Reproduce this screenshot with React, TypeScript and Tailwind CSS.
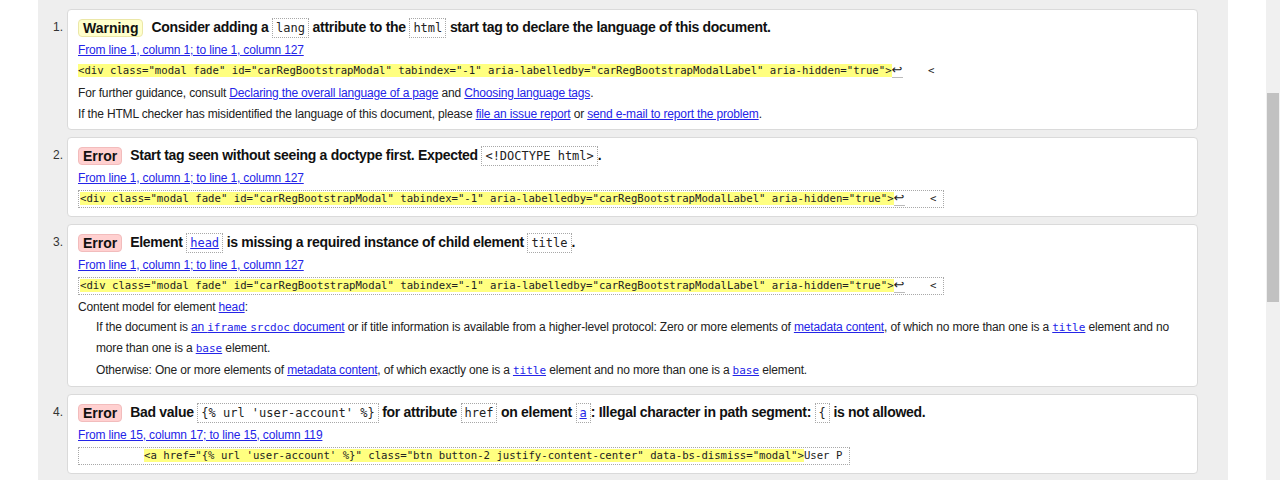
import React from "react";

const MONO = "font-['DejaVu_Sans_Mono','Liberation_Mono',monospace]";
const LINK = "text-[#2424e8] underline decoration-[#2424e8]";

const Code = ({ children, link }: { children: React.ReactNode; link?: boolean }) => (
  <span
    className={`${MONO} inline-block border border-dotted border-[#a8a8a8] px-[3px] align-middle text-[12px] font-normal leading-[18px] tracking-normal ${
      link ? LINK : "text-[#222]"
    }`}
  >
    {children}
  </span>
);

const Badge = ({ kind }: { kind: "Warning" | "Error" }) => (
  <span
    className={
      kind === "Warning"
        ? "inline-block rounded-[4px] border border-[#ebe7a8] bg-[#ffffcc] px-[4px] align-middle text-[14px] font-bold leading-[16px] tracking-normal text-[#111]"
        : "inline-block rounded-[4px] border border-[#f2bcbc] bg-[#ffd0d0] px-[4px] align-middle text-[14px] font-bold leading-[16px] tracking-normal text-[#111]"
    }
  >
    {kind}
  </span>
);

const Location = ({ text }: { text: string }) => (
  <div className="flex h-[22px] items-center pt-[1px]">
    <a className={LINK}>{text}</a>
  </div>
);

const DIV_TAG =
  '<div class="modal fade" id="carRegBootstrapModal" tabindex="-1" aria-labelledby="carRegBootstrapModalLabel" aria-hidden="true">';

const Return = () => (
  <span className="inline-block border-b border-[#bbb] font-['DejaVu_Sans',sans-serif] text-[13px] leading-[14px]">
    ↩
  </span>
);

const Extract = ({ boxed }: { boxed?: boolean }) => (
  <div className="flex h-[22px] items-center">
    <span
      className={`${MONO} inline-block whitespace-pre text-[10.65px] leading-[16px] tracking-normal text-[#222] ${
        boxed ? "border border-dotted border-[#a8a8a8] pl-[1px]" : ""
      }`}
    >
      <span className="bg-[#ffff80]">{DIV_TAG}</span>
      <Return />
      {"    < "}
    </span>
  </div>
);

const Card = ({ n, h, children }: { n: number; h: string; children: React.ReactNode }) => (
  <li className="flex">
    <div className="w-[29px] shrink-0 pr-[4px] pt-[7px] text-right text-[12px] leading-[22px] text-[#333]">
      {n}.
    </div>
    <div
      className={`${h} w-[1131px] rounded-[4px] border border-[#dadada] bg-white px-[10px] pt-[6px] text-[12px] tracking-[-0.16px] text-[#222]`}
    >
      {children}
    </div>
  </li>
);

const Heading = ({ children }: { children: React.ReactNode }) => (
  <div className="h-[22px] whitespace-nowrap text-[14px] font-bold leading-[22px] tracking-[-0.3px] text-[#111]">
    {children}
  </div>
);

export default function App() {
  return (
    <div className="flex h-[480px] overflow-hidden bg-white font-['Liberation_Sans',Arial,sans-serif]">
      <div className="w-[38px] shrink-0 bg-white" />
      <div className="flex-1 bg-[#eeeeee] pt-[9px]">
        <ol className="flex flex-col gap-[7px]">
          <Card n={1} h="h-[121px]">
            <Heading>
              <Badge kind="Warning" />
              <span className="ml-[8px]">Consider adding a </span>
              <Code>lang</Code> attribute to the <Code>html</Code> start tag to declare the language of this
              document.
            </Heading>
            <Location text="From line 1, column 1; to line 1, column 127" />
            <Extract />
            <div className="flex h-[21px] items-center whitespace-pre">
              For further guidance, consult <a className={LINK}>Declaring the overall language of a page</a> and{" "}
              <a className={LINK}>Choosing language tags</a>.
            </div>
            <div className="flex h-[21px] items-center whitespace-pre">
              If the HTML checker has misidentified the language of this document, please{" "}
              <a className={LINK}>file an issue report</a> or <a className={LINK}>send e-mail to report the problem</a>.
            </div>
          </Card>

          <Card n={2} h="h-[80px]">
            <Heading>
              <Badge kind="Error" />
              <span className="ml-[8px]">Start tag seen without seeing a doctype first. Expected </span>
              <Code>{"<!DOCTYPE html>"}</Code>.
            </Heading>
            <Location text="From line 1, column 1; to line 1, column 127" />
            <Extract boxed />
          </Card>

          <Card n={3} h="h-[163px]">
            <Heading>
              <Badge kind="Error" />
              <span className="ml-[8px]">Element </span>
              <Code link>head</Code> is missing a required instance of child element <Code>title</Code>.
            </Heading>
            <Location text="From line 1, column 1; to line 1, column 127" />
            <Extract boxed />
            <div className="flex h-[20px] items-center whitespace-pre">
              Content model for element <a className={LINK}>head</a>:
            </div>
            <div className="ml-[18px] whitespace-nowrap leading-[21px]">
              If the document is{" "}
              <a className={LINK}>
                an <span className={`${MONO} text-[11px] tracking-normal`}>iframe</span>{" "}
                <span className={`${MONO} text-[11px] tracking-normal`}>srcdoc</span> document
              </a>{" "}
              or if title information is available from a higher-level protocol: Zero or more elements of{" "}
              <a className={LINK}>metadata content</a>, of which no more than one is a{" "}
              <a className={`${LINK} ${MONO} text-[11px] tracking-normal`}>title</a> element and no
              <br />
              more than one is a <a className={`${LINK} ${MONO} text-[11px] tracking-normal`}>base</a> element.
            </div>
            <div className="ml-[18px] whitespace-nowrap leading-[22px]">
              Otherwise: One or more elements of <a className={LINK}>metadata content</a>, of which exactly one is a{" "}
              <a className={`${LINK} ${MONO} text-[11px] tracking-normal`}>title</a> element and no more than one is a{" "}
              <a className={`${LINK} ${MONO} text-[11px] tracking-normal`}>base</a> element.
            </div>
          </Card>

          <Card n={4} h="h-[80px]">
            <Heading>
              <Badge kind="Error" />
              <span className="ml-[8px]">Bad value </span>
              <Code>{"{% url 'user-account' %}"}</Code> for attribute <Code>href</Code> on element{" "}
              <Code link>a</Code>: Illegal character in path segment: <Code>{"{"}</Code> is not allowed.
            </Heading>
            <Location text="From line 15, column 17; to line 15, column 119" />
            <div className="flex h-[22px] items-center">
              <span
                className={`${MONO} inline-block whitespace-pre border border-dotted border-[#a8a8a8] pl-[1px] text-[10.65px] leading-[16px] tracking-normal text-[#222]`}
              >
                {"          "}
                <span className="bg-[#ffff80]">
                  {`<a href="{% url 'user-account' %}" class="btn button-2 justify-content-center" data-bs-dismiss="modal">`}
                </span>
                {"User P "}
              </span>
            </div>
          </Card>
        </ol>
      </div>
      <div className="w-[38px] shrink-0 bg-white" />
      <div className="w-[14px] shrink-0 bg-[#f0f0f0]">
        <div className="ml-[1px] mt-[93px] h-[209px] w-[12px] bg-[#c1c1c1]" />
      </div>
    </div>
  );
}
